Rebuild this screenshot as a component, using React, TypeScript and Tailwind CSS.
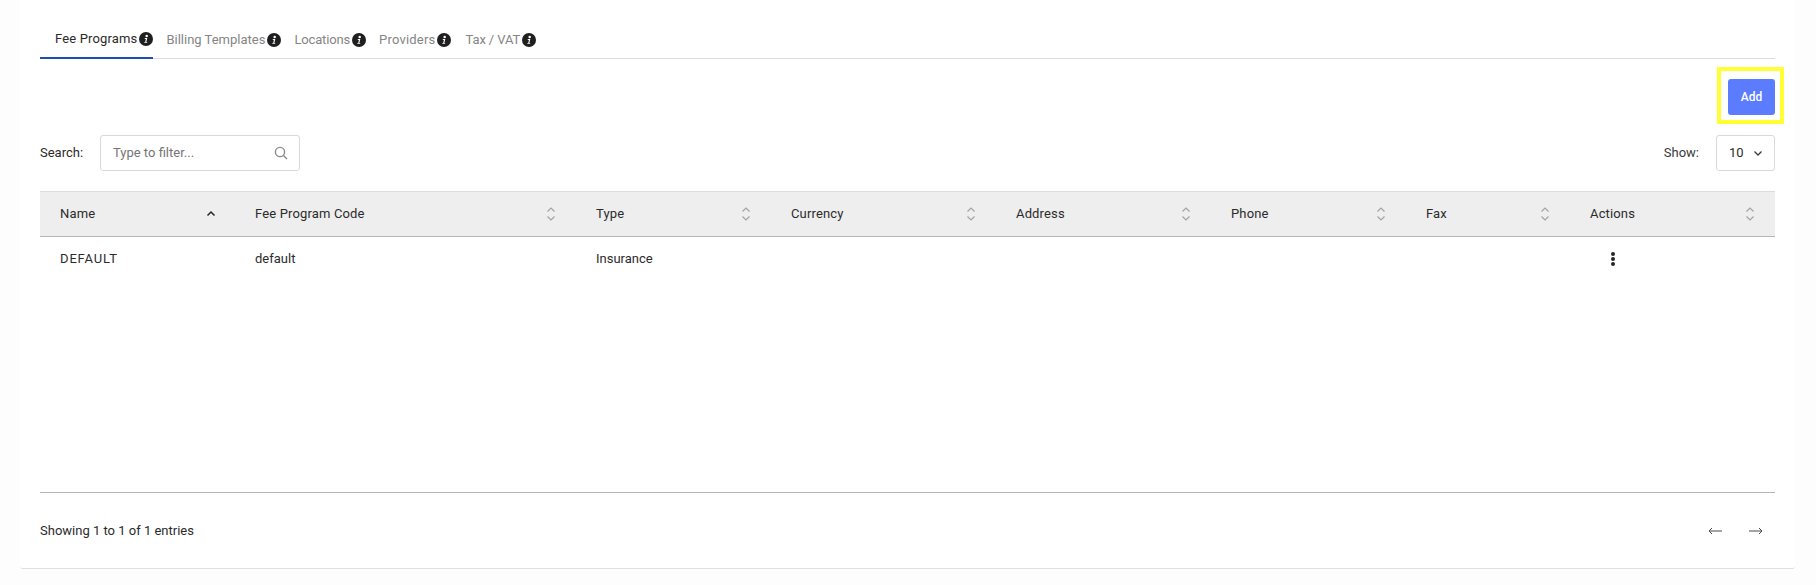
const font = { fontFamily: 'Roboto, sans-serif' };

function InfoIcon() {
  return (
    <svg width="14" height="14" viewBox="0 0 14 14" className="shrink-0">
      <circle cx="7" cy="7" r="7" fill="#1f1f1f" />
      <circle cx="7.7" cy="3.9" r="1.25" fill="#fff" />
      <path d="M5.4 6h2.9l-.95 3.9h.95l-.2.9H5.2l.2-.9h.8l.7-3h-.7z" fill="#fff" />
    </svg>
  );
}

function SortIcon() {
  return (
    <svg width="10" height="16" viewBox="0 0 10 16" fill="none" stroke="#a3a3a3" strokeWidth="1.2" className="shrink-0">
      <path d="M1.5 5.5 5 2l3.5 3.5" />
      <path d="M1.5 10.5 5 14l3.5-3.5" />
    </svg>
  );
}

function SortUpIcon() {
  return (
    <svg width="10" height="16" viewBox="0 0 10 16" fill="none" stroke="#262626" strokeWidth="1.5" className="shrink-0 translate-x-[1px]">
      <path d="M1.5 9.5 5 6l3.5 3.5" />
    </svg>
  );
}

const tabs = [
  { label: 'Fee Programs', active: true, cls: 'pl-[15px] tracking-[0.15px]' },
  { label: 'Billing Templates', active: false, cls: 'pl-[13px]' },
  { label: 'Locations', active: false, cls: 'pl-[13px] tracking-[-0.15px]' },
  { label: 'Providers', active: false, cls: 'pl-[13px] tracking-[0.2px]' },
  { label: 'Tax / VAT', active: false, cls: 'pl-[14px] tracking-[-0.1px]' },
];

const columns = [
  { label: 'Name', cls: 'w-[195px]', sorted: true },
  { label: 'Fee Program Code', cls: 'w-[341px]' },
  { label: 'Type', cls: 'w-[195px]' },
  { label: 'Currency', cls: 'w-[225px]' },
  { label: 'Address', cls: 'w-[215px]' },
  { label: 'Phone', cls: 'w-[195px]' },
  { label: 'Fax', cls: 'w-[164px]' },
  { label: 'Actions', cls: 'flex-1' },
];

const cells = ['DEFAULT', 'default', 'Insurance', '', '', '', ''];

export default function App() {
  return (
    <div className="min-h-[585px] bg-[#fdfdfd] pb-[16px] pl-[20px] pr-[21px] text-[13px] text-[#2b2b2b]" style={font}>
      <div className="flex h-[569px] flex-col rounded-b-[3px] border-b border-b-[#e0e0e0] bg-white px-[20px] pt-[20px]">
        <div className="flex h-[39px] border-b border-[#dcdcdc]">
          {tabs.map((t) => (
            <div
              key={t.label}
              className={`-mb-px flex h-[39px] items-center gap-[2px] whitespace-nowrap ${t.cls} ${t.active ? 'border-b-[2px] border-[#1d4eb5] text-[#2b2b2b]' : 'text-[#858585]'}`}
            >
              <span>{t.label}</span>
              <InfoIcon />
            </div>
          ))}
        </div>

        <div className="mt-[20px] flex justify-end">
          <div className="relative">
            <button className="block h-[36px] w-[47px] rounded-[3px] bg-[#5c7cff] text-[12px] font-medium text-white">
              Add
            </button>
            <div className="pointer-events-none absolute -bottom-[9px] -left-[11px] -right-[9px] -top-[12px] border-[4px] border-[#ffff33]" />
          </div>
        </div>

        <div className="mt-[20px] flex items-center justify-between">
          <div className="flex items-center">
            <span className="w-[60px]">Search:</span>
            <div className="flex h-[36px] w-[200px] items-center justify-between rounded-[3px] border border-[#d9d9d9] pl-[12px] pr-[11px]">
              <span className="text-[#757575]">Type to filter...</span>
              <svg width="14" height="14" viewBox="0 0 14 14" fill="none" stroke="#8a8a8a" strokeWidth="1.4">
                <circle cx="6" cy="6" r="4.6" />
                <path d="m9.5 9.5 3.5 3.5" />
              </svg>
            </div>
          </div>
          <div className="flex items-center">
            <span className="mr-[17px] text-[#3a3a3a]">Show:</span>
            <div className="flex h-[36px] w-[59px] items-center rounded-[3px] border border-[#d9d9d9] pl-[12px]">
              <span className="-mt-[1px]">10</span>
              <svg width="10" height="8" viewBox="0 0 10 8" fill="none" stroke="#3a3a3a" strokeWidth="1.3" className="ml-[9px]">
                <path d="M1.5 2.5 5 6l3.5-3.5" />
              </svg>
            </div>
          </div>
        </div>

        <div className="mt-[20px] flex h-[46px] border-y border-t-[#dcdcdc] border-b-[#b5b5b5] bg-[#eeeeee]">
          {columns.map((c) => (
            <div key={c.label} className={`flex items-center justify-between pl-[20px] pr-[20px] ${c.cls}`}>
              <span className="tracking-[0.15px]">{c.label}</span>
              {c.sorted ? <SortUpIcon /> : <SortIcon />}
            </div>
          ))}
        </div>

        <div className="flex h-[44px] text-[#2b2b2b]">
          {columns.slice(0, 7).map((c, i) => (
            <div key={c.label} className={`flex items-center pl-[20px] ${c.cls}`}>
              <span className={i === 0 ? 'tracking-[0.85px]' : ''}>{cells[i]}</span>
            </div>
          ))}
          <div className="flex flex-1 items-center pl-[20px]">
            <svg width="6" height="16" viewBox="0 0 6 16" fill="#262626" className="ml-[20px]">
              <circle cx="3" cy="3" r="2" />
              <circle cx="3" cy="8" r="2" />
              <circle cx="3" cy="13" r="2" />
            </svg>
          </div>
        </div>

        <div className="mt-[211px] flex flex-1 items-center justify-between border-t border-[#b5b5b5]">
          <span>Showing 1 to 1 of 1 entries</span>
          <div className="mr-[12px] flex items-center gap-[27px] text-[#4a4a4a]">
            <svg width="14" height="8" viewBox="0 0 14 8" fill="none" stroke="#4a4a4a" strokeWidth="1">
              <path d="M14 4H1M4 1 1 4l3 3" />
            </svg>
            <svg width="14" height="8" viewBox="0 0 14 8" fill="none" stroke="#4a4a4a" strokeWidth="1">
              <path d="M0 4h13M10 1l3 3-3 3" />
            </svg>
          </div>
        </div>
      </div>
    </div>
  );
}
